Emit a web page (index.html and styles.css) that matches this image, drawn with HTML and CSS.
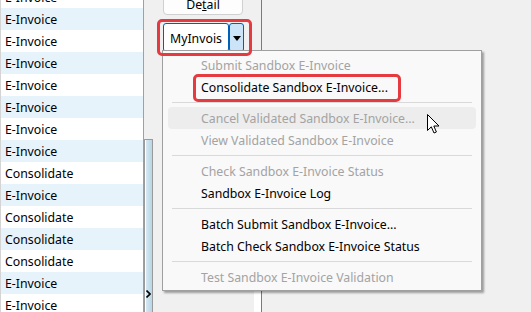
FILE: index.html
```html
<!DOCTYPE html>
<html lang="en">
<head>
    <meta charset="UTF-8">
    <title>MyInvois</title>
    <link rel="stylesheet" href="styles.css">
</head>
<body>
    <div class="list">
        <div class="row">E-Invoice</div>
        <div class="row alt">E-Invoice</div>
        <div class="row">E-Invoice</div>
        <div class="row alt">E-Invoice</div>
        <div class="row">E-Invoice</div>
        <div class="row alt">E-Invoice</div>
        <div class="row">E-Invoice</div>
        <div class="row alt">E-Invoice</div>
        <div class="row">Consolidate</div>
        <div class="row alt">E-Invoice</div>
        <div class="row">Consolidate</div>
        <div class="row alt">Consolidate</div>
        <div class="row">Consolidate</div>
        <div class="row alt">E-Invoice</div>
        <div class="row">E-Invoice</div>
    </div>
    <div class="scroll">
        <div class="thumb"></div>
    </div>
    <div class="side">
        <button class="btn-detail">De<u>t</u>ail</button>
        <div class="split">
            <span class="split-main">MyInvois</span>
            <span class="split-arrow"></span>
        </div>
        <div class="side-fill"></div>
        <div class="side-strip"></div>
    </div>
    <div class="rest"></div>

    <div class="menu">
        <div class="item off">Submit Sandbox E-Invoice</div>
        <div class="item">Consolidate Sandbox E-Invoice...</div>
        <div class="sep"></div>
        <div class="item off hover">Cancel Validated Sandbox E-Invoice...</div>
        <div class="item off">View Validated Sandbox E-Invoice</div>
        <div class="sep"></div>
        <div class="item off">Check Sandbox E-Invoice Status</div>
        <div class="item">Sandbox E-Invoice Log</div>
        <div class="sep"></div>
        <div class="item">Batch Submit Sandbox E-Invoice...</div>
        <div class="item">Batch Check Sandbox E-Invoice Status</div>
        <div class="sep"></div>
        <div class="item off">Test Sandbox E-Invoice Validation</div>
    </div>

    <div class="mark mark-btn"></div>
    <div class="mark mark-item"></div>

    <svg class="chev" width="5" height="8" viewBox="0 0 5 8">
        <path d="M0.5 0.5 L4 4 L0.5 7.5" fill="none" stroke="#000" stroke-width="1.6"/>
    </svg>
    <svg class="cursor" width="13" height="21" viewBox="0 0 13 21">
        <path d="M0.5 0.5 L0.5 16.5 L4.3 12.8 L7 19 L9.4 18 L6.8 12 L12 12 Z" fill="#fff" stroke="#000" stroke-width="1" stroke-linejoin="round"/>
    </svg>
</body>
</html>
```

FILE: styles.css
```css
*{
    margin: 0;
    padding: 0;
    box-sizing: border-box;
}
body{
    width: 531px;
    height: 312px;
    overflow: hidden;
    display: flex;
    background: #f0f0f0;
    font-family: "Noto Sans", "Open Sans", sans-serif;
    font-size: 12.3px;
    color: #000;
}
.list{
    width: 144px;
    margin-top: -14px;
    background: #fff;
    border-left: 1px solid #d4d4d4;
    border-right: 1px solid #a0a0a0;
}
.row{
    height: 22px;
    line-height: 22px;
    padding: 1px 0 0 4px;
}
.alt{
    background: #e6f3fb;
}
.scroll{
    width: 9px;
    display: flex;
    flex-direction: column;
    padding-top: 139px;
}
.thumb{
    flex: 1;
    border: 1px solid #9a9a9a;
    border-bottom: none;
    border-radius: 1px 1px 0 0;
    background: linear-gradient(to right, #fff 0, #fff 1px, #d4e8f2 1px, #b7d6e6 100%);
}
.side{
    width: 108px;
    display: flex;
    flex-direction: column;
    padding-left: 10px;
}
.btn-detail{
    width: 80px;
    height: 26px;
    margin-top: -11px;
    padding-top: 4px;
    border: 1px solid #d0d0d0;
    border-radius: 4px;
    background: #fdfdfd;
    font: inherit;
    color: #000;
}
.split{
    display: flex;
    margin-top: 8px;
    height: 29px;
    width: 81px;
}
.split-main{
    width: 66px;
    padding-top: 1px;
    border: 1px solid #005fb8;
    border-radius: 3px;
    background: #fff;
    display: flex;
    align-items: center;
    justify-content: center;
}
.split-arrow{
    width: 15px;
    border: 1px solid #005fb8;
    border-radius: 3px;
    background: #cce4f7;
    display: flex;
    align-items: center;
    justify-content: center;
}
.split-arrow::after{
    content: "";
    border-left: 4px solid transparent;
    border-right: 4px solid transparent;
    border-top: 5px solid #000;
    margin-top: 1px;
}
.side-fill{
    flex: 1;
}
.side-strip{
    height: 22px;
    width: 7px;
    margin-left: 91px;
    background: #fff;
}
.rest{
    flex: 1;
    border-left: 1px solid #7a7a7a;
}
.menu{
    position: absolute;
    left: 162px;
    top: 50px;
    width: 320px;
    padding: 3px 0 2px;
    background: #f9f9f9;
    border: 1px solid #a0a0a0;
    box-shadow: 2px 2px 2px rgba(0,0,0,0.35);
}
.item{
    height: 22px;
    line-height: 22px;
    margin: 0 5px;
    padding: 1px 0 0 33px;
    border-radius: 4px;
}
.off{
    color: #a3a3a3;
}
.hover{
    background: #ededed;
}
.sep{
    height: 1px;
    margin: 4px 9px 4px 9px;
    background: #d9d9d9;
}
.mark{
    position: absolute;
    border: 3px solid #e53a3f;
    border-radius: 5px;
}
.mark-btn{
    left: 157px;
    top: 19px;
    width: 95px;
    height: 37px;
}
.mark-item{
    left: 193px;
    top: 74px;
    width: 208px;
    height: 28px;
}
.chev{
    position: absolute;
    left: 146px;
    top: 290px;
}
.cursor{
    position: absolute;
    left: 427px;
    top: 114px;
}
```
